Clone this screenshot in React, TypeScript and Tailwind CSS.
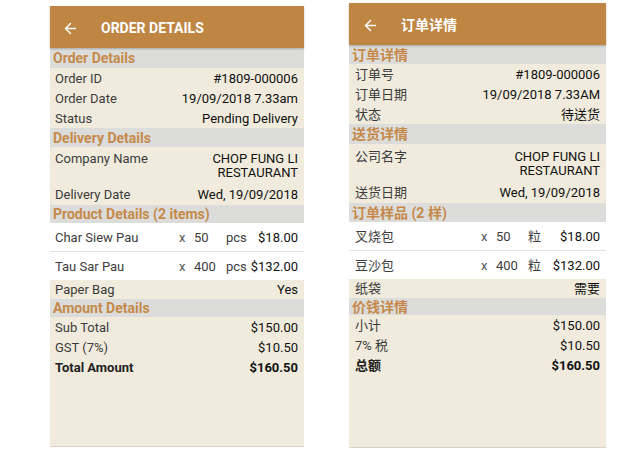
import React from 'react';
import { ArrowLeft } from 'lucide-react';

type Row = { label: string; value: string[]; bold?: boolean };
type Item = { name: string; qty: string; unit: string; price: string };

type Screen = {
  title: string;
  orderTitle: string;
  orderRows: Row[];
  deliveryTitle: string;
  company: Row;
  deliveryDate: Row;
  productTitle: string;
  items: Item[];
  bag: Row;
  amountTitle: string;
  amountRows: Row[];
};

const en: Screen = {
  title: 'ORDER DETAILS',
  orderTitle: 'Order Details',
  orderRows: [
    { label: 'Order ID', value: ['#1809-000006'] },
    { label: 'Order Date', value: ['19/09/2018 7.33am'] },
    { label: 'Status', value: ['Pending Delivery'] },
  ],
  deliveryTitle: 'Delivery Details',
  company: { label: 'Company Name', value: ['CHOP FUNG LI', 'RESTAURANT'] },
  deliveryDate: { label: 'Delivery Date', value: ['Wed, 19/09/2018'] },
  productTitle: 'Product Details (2 items)',
  items: [
    { name: 'Char Siew Pau', qty: '50', unit: 'pcs', price: '$18.00' },
    { name: 'Tau Sar Pau', qty: '400', unit: 'pcs', price: '$132.00' },
  ],
  bag: { label: 'Paper Bag', value: ['Yes'] },
  amountTitle: 'Amount Details',
  amountRows: [
    { label: 'Sub Total', value: ['$150.00'] },
    { label: 'GST (7%)', value: ['$10.50'] },
    { label: 'Total Amount', value: ['$160.50'], bold: true },
  ],
};

const zh: Screen = {
  title: '订单详情',
  orderTitle: '订单详情',
  orderRows: [
    { label: '订单号', value: ['#1809-000006'] },
    { label: '订单日期', value: ['19/09/2018 7.33AM'] },
    { label: '状态', value: ['待送货'] },
  ],
  deliveryTitle: '送货详情',
  company: { label: '公司名字', value: ['CHOP FUNG LI', 'RESTAURANT'] },
  deliveryDate: { label: '送货日期', value: ['Wed, 19/09/2018'] },
  productTitle: '订单样品 (2 样)',
  items: [
    { name: '叉烧包', qty: '50', unit: '粒', price: '$18.00' },
    { name: '豆沙包', qty: '400', unit: '粒', price: '$132.00' },
  ],
  bag: { label: '纸袋', value: ['需要'] },
  amountTitle: '价钱详情',
  amountRows: [
    { label: '小计', value: ['$150.00'] },
    { label: '7% 税', value: ['$10.50'] },
    { label: '总额', value: ['$160.50'], bold: true },
  ],
};

const Section = ({ text, h }: { text: string; h: string }) => (
  <div className={`${h} bg-[#dcdcdb] pl-[3px] flex items-center text-[14px] font-bold text-[#c58a4a] leading-none`}>
    {text}
  </div>
);

const Line = ({ row, px }: { row: Row; px: string }) => (
  <div className={`h-[20px] ${px} flex items-center justify-between text-[13px] leading-none`}>
    <span className={row.bold ? 'font-bold text-[#222]' : 'text-[#3c3c3c]'}>{row.label}</span>
    <span className={row.bold ? 'font-bold text-[#111]' : 'text-[#111]'}>{row.value[0]}</span>
  </div>
);

const Phone = ({ s, wide }: { s: Screen; wide?: boolean }) => {
  const px = wide ? 'pl-[6px] pr-[6px]' : 'pl-[5px] pr-[6px]';
  return (
    <div
      className={`flex flex-col bg-[#f0ebdc] border-b border-[#d9d4c6] ${
        wide ? 'w-[257px] h-[445px] mt-[3px] ml-[45px]' : 'w-[254px] h-[441px] mt-[6px] ml-[50px]'
      }`}
    >
      {/* barra do topo */}
      <div className="h-[42px] pt-[2px] bg-[#be8543] flex items-center text-white shadow-[0_1px_2px_rgba(0,0,0,0.25)] relative">
        <div className={wide ? 'w-[13px]' : 'w-[12px]'} />
        <ArrowLeft size={17} strokeWidth={2} />
        <span className="text-[14px] font-bold ml-[22px]">{s.title}</span>
      </div>

      <Section text={s.orderTitle} h={wide ? 'h-[19px]' : 'h-[20px]'} />
      {s.orderRows.map((r) => (
        <Line key={r.label} row={r} px={px} />
      ))}

      <Section text={s.deliveryTitle} h={wide ? 'h-[20px]' : 'h-[19px]'} />
      <div className={`${px} ${wide ? 'pt-[6px]' : 'pt-[5px]'} pb-[4px] flex justify-between text-[13px] leading-[14px]`}>
        <span className="text-[#3c3c3c]">{s.company.label}</span>
        <span className="text-[#111] text-right">
          {s.company.value[0]}
          <br />
          {s.company.value[1]}
        </span>
      </div>
      <div className={`h-[21px] ${px} flex items-center justify-between text-[13px] leading-none`}>
        <span className="text-[#3c3c3c]">{s.deliveryDate.label}</span>
        <span className="text-[#111]">{s.deliveryDate.value[0]}</span>
      </div>

      <Section text={s.productTitle} h={wide ? 'h-[19px]' : 'h-[18px]'} />
      <div className="bg-white">
        {s.items.map((it, i) => (
          <div
            key={it.name}
            className={`${i === 0 ? 'h-[29px] border-b border-[#e6e3dc]' : 'h-[28px]'} ${px} flex items-center text-[13px] leading-none`}
          >
            <span className={`${wide ? 'w-[126px]' : 'w-[124px]'} text-[#3c3c3c]`}>{it.name}</span>
            <span className="w-[15px] text-[#555]">x</span>
            <span className="w-[32px] text-[#3c3c3c]">{it.qty}</span>
            <span className="text-[#3c3c3c]">{it.unit}</span>
            <span className="flex-1 text-right text-[#111]">{it.price}</span>
          </div>
        ))}
      </div>
      <div className={`h-[19px] ${px} flex items-center justify-between text-[13px] leading-none`}>
        <span className="text-[#3c3c3c]">{s.bag.label}</span>
        <span className="text-[#111]">{s.bag.value[0]}</span>
      </div>

      <Section text={s.amountTitle} h={wide ? 'h-[17px]' : 'h-[18px]'} />
      {s.amountRows.map((r) => (
        <Line key={r.label} row={r} px={px} />
      ))}
    </div>
  );
};

export default function App() {
  return (
    <div
      className="w-[636px] h-[459px] bg-white flex items-start"
      style={{ fontFamily: 'Roboto, "Noto Sans CJK SC", sans-serif' }}
    >
      <Phone s={en} />
      <Phone s={zh} wide />
    </div>
  );
}
